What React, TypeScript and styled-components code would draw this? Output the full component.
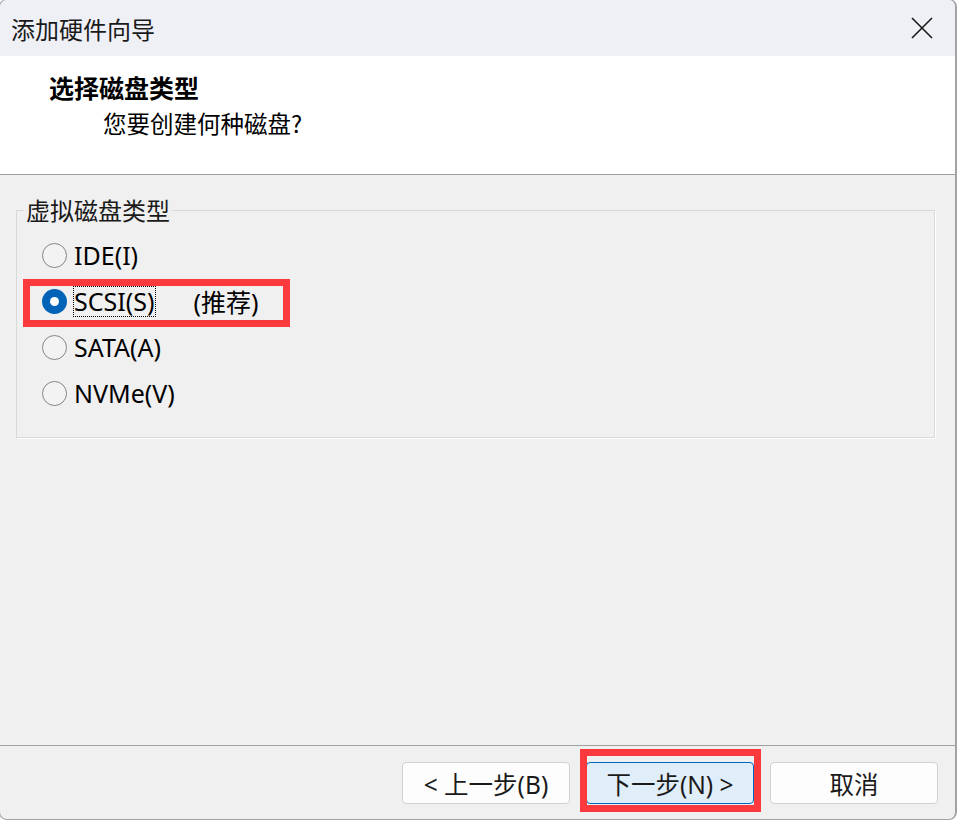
import React from "react"
import styled, { createGlobalStyle } from "styled-components"

const GlobalStyle = createGlobalStyle`
  html, body {
    margin: 0;
    padding: 0;
    background: #ffffff;
  }
  body {
    font-family: "Noto Sans", "Noto Sans CJK SC", sans-serif;
    color: #000000;
    overflow: hidden;
  }
`

const Window = styled.div`
  box-sizing: border-box;
  width: 958px;
  height: 821px;
  margin: -1px 0 0 -1px;
  display: flex;
  flex-direction: column;
  border: 1px solid #a3a3a3;
  border-right-width: 2px;
  border-radius: 8px;
  overflow: hidden;
  background: #f0f0f0;
`

const TitleBar = styled.div`
  height: 56px;
  flex: none;
  display: flex;
  align-items: center;
  justify-content: space-between;
  padding: 0 22px 0 11px;
  background: #eff0f6;
`

const TitleText = styled.span`
  font-size: 24px;
  font-family: "Noto Sans CJK SC", sans-serif;
  color: #1a1a1a;
`

const CloseButton = styled.span`
  display: flex;
  width: 22px;
  height: 22px;
`

const Header = styled.div`
  box-sizing: border-box;
  height: 119px;
  flex: none;
  padding: 15px 0 0 49px;
  background: #ffffff;
  border-bottom: 1px solid #a0a0a0;
`

const Heading = styled.div`
  font-family: "Noto Sans CJK SC", sans-serif;
  font-size: 25px;
  font-weight: 700;
  line-height: 32px;
  margin-bottom: 4px;
`

const SubHeading = styled.div`
  font-family: "Noto Sans CJK SC", sans-serif;
  font-size: 23.5px;
  line-height: 32px;
  padding-left: 54px;
`

const Body = styled.div`
  flex: 1;
  padding: 20px 20px 0 16px;
`

const GroupBox = styled.fieldset`
  margin: 0;
  padding: 7px 0 21px 0;
  border: 1px solid #d9d9d9;
  box-shadow: 1px 1px 0 #ffffff;
`

const GroupLegend = styled.legend`
  margin-left: 7px;
  padding: 0 2px;
  font-family: "Noto Sans CJK SC", sans-serif;
  font-size: 24px;
  line-height: 30px;
  color: #1a1a1a;
`

const RadioRow = styled.label<{ $marked?: boolean }>`
  position: relative;
  display: flex;
  align-items: center;
  width: fit-content;
  height: 46px;
  padding-left: 25px;
  font-size: 25px;

  ${p => p.$marked && `
    &::after {
      content: "";
      position: absolute;
      left: 6px;
      top: 1px;
      width: 267px;
      height: 48px;
      box-sizing: border-box;
      border: 7px solid #fa3a3c;
    }
  `}
`

const RadioDot = styled.span<{ $checked?: boolean }>`
  box-sizing: border-box;
  width: 25px;
  height: 25px;
  border-radius: 50%;
  margin-right: 7px;
  display: flex;
  align-items: center;
  justify-content: center;
  border: ${p => (p.$checked ? "none" : "1.5px solid #858585")};
  background: ${p => (p.$checked ? "#0063b8" : "#f3f3f3")};

  &::after {
    content: "";
    display: ${p => (p.$checked ? "block" : "none")};
    width: 9px;
    height: 9px;
    border-radius: 50%;
    background: #ffffff;
  }
`

const RadioLabel = styled.span<{ $focused?: boolean }>`
  line-height: 29px;
  outline: ${p => (p.$focused ? "1px dotted #000000" : "none")};
  padding-right: 1px;
`

const Hint = styled.span`
  margin-left: 38px;
  padding-right: 28px;
  font-family: "Noto Sans", "Noto Sans CJK SC", sans-serif;
`

const Footer = styled.div`
  box-sizing: border-box;
  height: 74px;
  flex: none;
  display: flex;
  justify-content: flex-end;
  align-items: flex-start;
  gap: 16px;
  padding: 16px 17px 0 0;
  border-top: 1px solid #a0a0a0;
`

const Button = styled.button<{ $primary?: boolean; $marked?: boolean }>`
  position: relative;
  width: 168px;
  height: 42px;
  border-radius: 4px;
  font-family: "Noto Sans", "Noto Sans CJK SC", sans-serif;
  font-size: 24.5px;
  color: #1a1a1a;
  border: 1px solid ${p => (p.$primary ? "#0067c0" : "#d0d0d0")};
  background: ${p => (p.$primary ? "#e0eef9" : "#fdfdfd")};

  ${p => p.$marked && `
    &::after {
      content: "";
      position: absolute;
      left: -7px;
      top: -14px;
      right: -8px;
      bottom: -9px;
      border: 7px solid #fa3a3c;
    }
  `}
`

const options = [
  { key: "ide", label: "IDE(I)" },
  { key: "scsi", label: "SCSI(S)", hint: "(推荐)", checked: true },
  { key: "sata", label: "SATA(A)" },
  { key: "nvme", label: "NVMe(V)" },
]

const App: React.FC = () => {
  return (
    <>
      <GlobalStyle />
      <Window>
        <TitleBar>
          <TitleText>添加硬件向导</TitleText>
          <CloseButton>
            <svg width="22" height="22" viewBox="0 0 22 22">
              <path d="M1 1 L21 21 M21 1 L1 21" stroke="#1a1a1a" strokeWidth="1.6" fill="none" />
            </svg>
          </CloseButton>
        </TitleBar>
        <Header>
          <Heading>选择磁盘类型</Heading>
          <SubHeading>您要创建何种磁盘?</SubHeading>
        </Header>
        <Body>
          <GroupBox>
            <GroupLegend>虚拟磁盘类型</GroupLegend>
            {options.map(o => (
              <RadioRow key={o.key} $marked={o.checked}>
                <RadioDot $checked={o.checked} />
                <RadioLabel $focused={o.checked}>{o.label}</RadioLabel>
                {o.hint && <Hint>{o.hint}</Hint>}
              </RadioRow>
            ))}
          </GroupBox>
        </Body>
        <Footer>
          <Button>&lt; 上一步(B)</Button>
          <Button $primary $marked>下一步(N) &gt;</Button>
          <Button>取消</Button>
        </Footer>
      </Window>
    </>
  )
}

export default App
